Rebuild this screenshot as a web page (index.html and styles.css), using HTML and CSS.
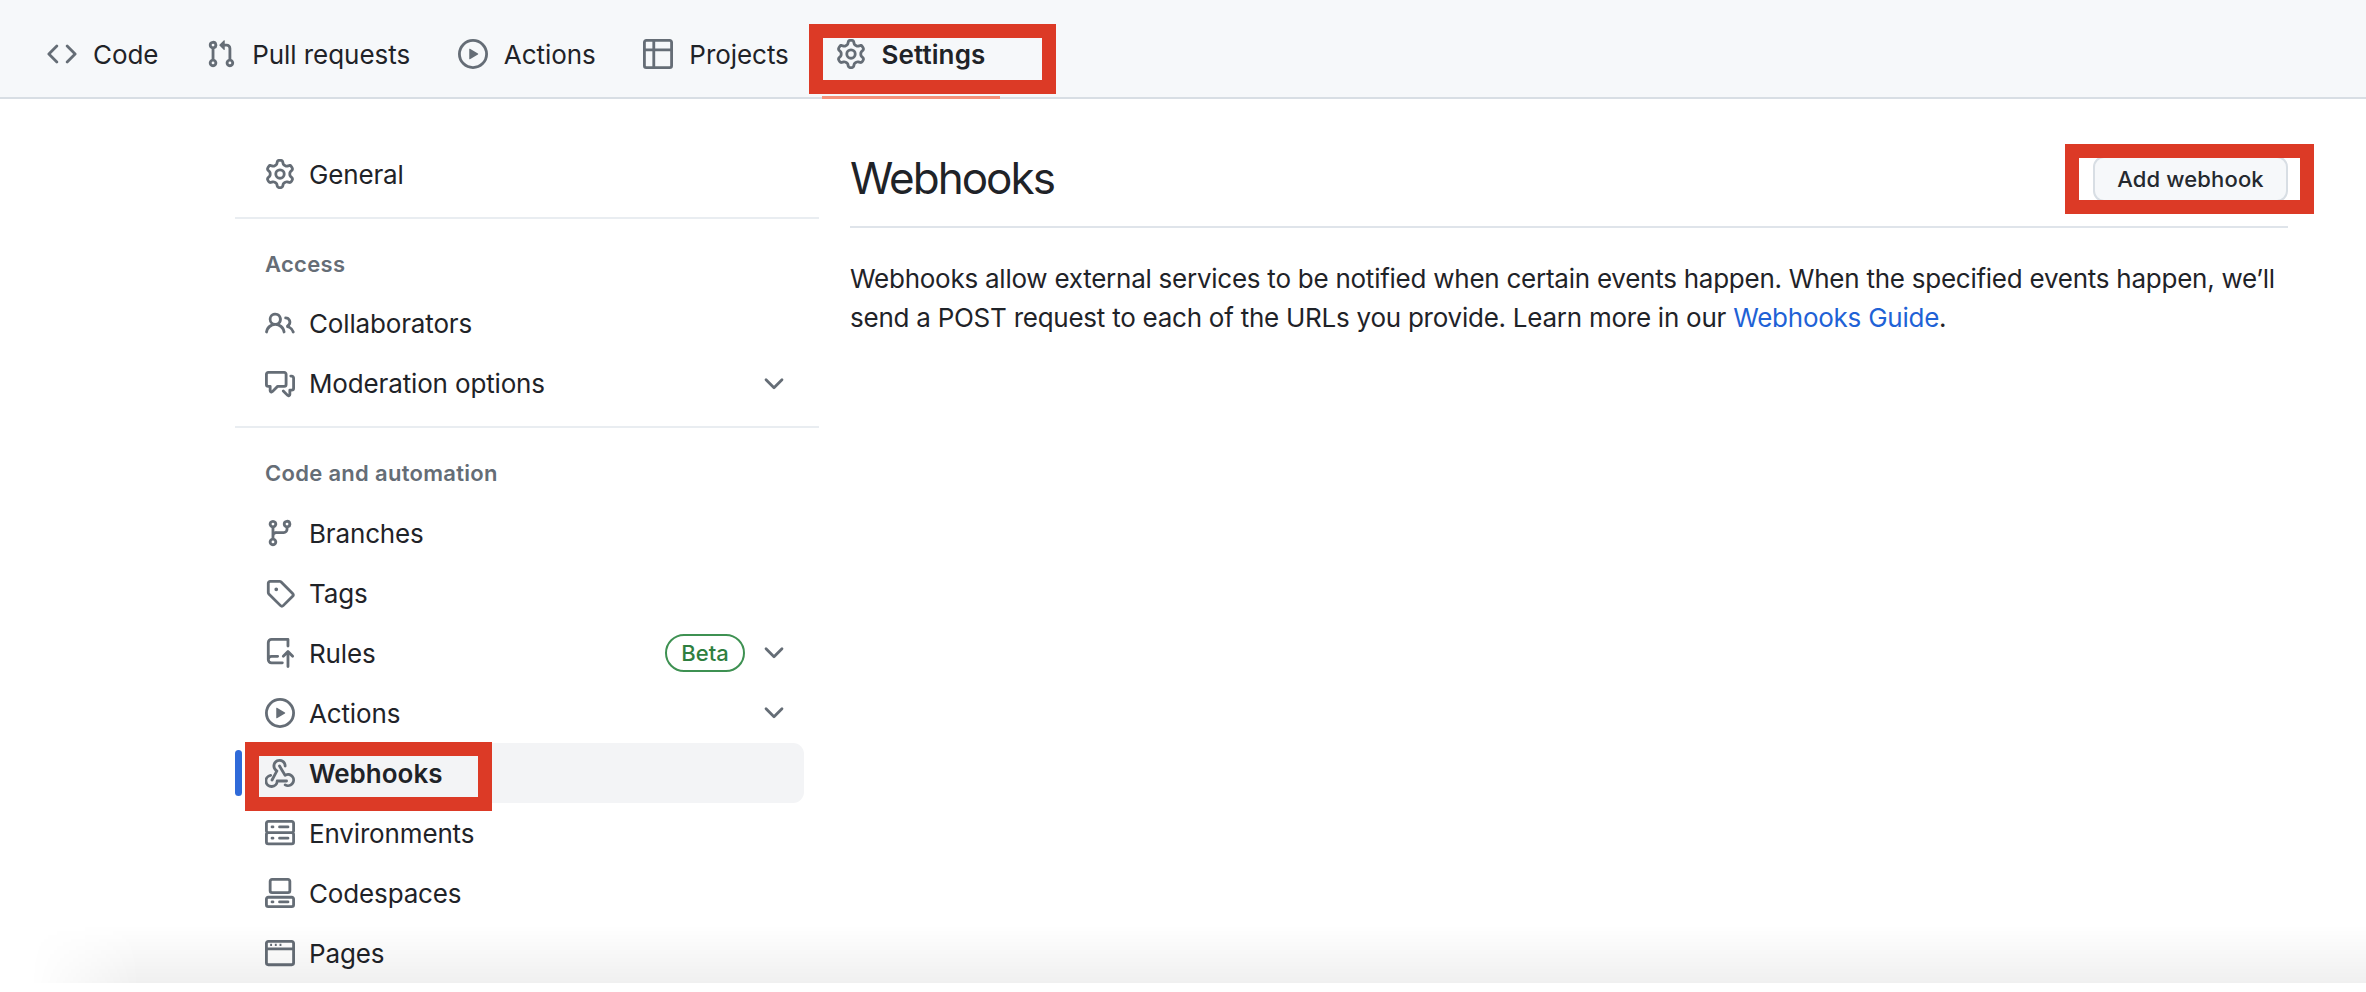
FILE: index.html
```html
<!DOCTYPE html>
<html lang="en">
<head>
<meta charset="utf-8">
<title>Webhooks</title>
<link rel="stylesheet" href="styles.css">
</head>
<body>
<svg class="sprite" width="0" height="0" aria-hidden="true">
  <symbol id="i-code" viewBox="0 0 16 16"><path d="M11.28 3.22l4.25 4.25a.75.75 0 010 1.06l-4.25 4.25a.749.749 0 01-1.275-.326.749.749 0 01.215-.734L13.94 8l-3.72-3.72a.749.749 0 01.326-1.275.749.749 0 01.734.215Zm-6.56 0a.751.751 0 011.042.018.751.751 0 01.018 1.042L2.06 8l3.72 3.72a.749.749 0 01-.326 1.275.749.749 0 01-.734-.215L.47 8.53a.75.75 0 010-1.06Z"/></symbol>
  <symbol id="i-pr" viewBox="0 0 16 16"><path d="M1.5 3.25a2.25 2.25 0 113 2.122v5.256a2.251 2.251 0 11-1.5 0V5.372A2.25 2.25 0 011.5 3.25Zm5.677-.177L9.573.677A.25.25 0 0110 .854V2.5h1A2.5 2.5 0 0113.5 5v5.628a2.251 2.251 0 11-1.5 0V5a1 1 0 00-1-1h-1v1.646a.25.25 0 01-.427.177L7.177 3.427a.25.25 0 010-.354ZM3.75 2.5a.75.75 0 100 1.5.75.75 0 000-1.5Zm0 9.5a.75.75 0 100 1.5.75.75 0 000-1.5Zm8.25.75a.75.75 0 101.5 0 .75.75 0 00-1.5 0Z"/></symbol>
  <symbol id="i-play" viewBox="0 0 16 16"><path d="M8 0a8 8 0 110 16A8 8 0 018 0ZM1.5 8a6.5 6.5 0 1013 0 6.5 6.5 0 00-13 0Zm4.879-2.773l4.264 2.559a.25.25 0 010 .428l-4.264 2.559A.25.25 0 016 10.559V5.442a.25.25 0 01.379-.215Z"/></symbol>
  <symbol id="i-table" viewBox="0 0 16 16"><path d="M0 1.75C0 .784.784 0 1.75 0h12.5C15.216 0 16 .784 16 1.75v12.5A1.75 1.75 0 0114.25 16H1.75A1.75 1.75 0 010 14.25ZM6.5 6.5v8h7.75a.25.25 0 00.25-.25V6.5Zm8-1.5V1.75a.25.25 0 00-.25-.25H6.5V5Zm-13 1.5v7.75c0 .138.112.25.25.25H5v-8ZM5 5V1.5H1.75a.25.25 0 00-.25.25V5Z"/></symbol>
  <symbol id="i-gear" viewBox="0 0 16 16"><path d="M8 0a8.2 8.2 0 0 1 .701.031C9.444.095 9.99.645 10.16 1.29l.288 1.107c.018.066.079.158.212.224.231.114.454.243.668.386.123.082.233.09.299.071l1.103-.303c.644-.176 1.392.021 1.82.63.27.385.506.792.704 1.218.315.675.111 1.422-.364 1.891l-.814.806c-.049.048-.098.147-.088.294.016.257.016.515 0 .772-.01.147.038.246.088.294l.814.806c.475.469.679 1.216.364 1.891a7.977 7.977 0 0 1-.704 1.217c-.428.61-1.176.807-1.82.63l-1.102-.302c-.067-.019-.177-.011-.3.071a5.909 5.909 0 0 1-.668.386c-.133.066-.194.158-.211.224l-.29 1.106c-.168.646-.715 1.196-1.458 1.26a8.006 8.006 0 0 1-1.402 0c-.743-.064-1.289-.614-1.458-1.26l-.289-1.106c-.018-.066-.079-.158-.212-.224a5.738 5.738 0 0 1-.668-.386c-.123-.082-.233-.09-.299-.071l-1.103.303c-.644.176-1.392-.021-1.82-.63a8.12 8.12 0 0 1-.704-1.218c-.315-.675-.111-1.422.363-1.891l.815-.806c.05-.048.098-.147.088-.294a6.214 6.214 0 0 1 0-.772c.01-.147-.038-.246-.088-.294l-.815-.806C.635 6.045.431 5.298.746 4.623a7.92 7.92 0 0 1 .704-1.217c.428-.61 1.176-.807 1.82-.63l1.102.302c.067.019.177.011.3-.071.214-.143.437-.272.668-.386.133-.066.194-.158.211-.224l.29-1.106C6.009.645 6.556.095 7.299.03 7.53.01 7.764 0 8 0Zm-.571 1.525c-.036.003-.108.036-.137.146l-.289 1.105c-.147.561-.549.967-.998 1.189-.173.086-.34.183-.5.29-.417.278-.97.423-1.529.27l-1.103-.303c-.109-.03-.175.016-.195.045-.22.312-.412.644-.573.99-.014.031-.021.11.059.19l.815.806c.411.406.562.957.53 1.456a4.709 4.709 0 0 0 0 .582c.032.499-.119 1.05-.53 1.456l-.815.806c-.081.08-.073.159-.059.19.162.346.353.677.573.989.02.03.085.076.195.046l1.102-.303c.56-.153 1.113-.008 1.53.27.161.107.328.204.501.29.447.222.85.629.997 1.189l.289 1.105c.029.109.101.143.137.146a6.6 6.6 0 0 0 1.142 0c.036-.003.108-.036.137-.146l.289-1.105c.147-.561.549-.967.998-1.189.173-.086.34-.183.5-.29.417-.278.97-.423 1.529-.27l1.103.303c.109.029.175-.016.195-.045.22-.313.411-.644.573-.99.014-.031.021-.11-.059-.19l-.815-.806c-.411-.406-.562-.957-.53-1.456a4.709 4.709 0 0 0 0-.582c-.032-.499.119-1.05.53-1.456l.815-.806c.081-.08.073-.159.059-.19a6.464 6.464 0 0 0-.573-.989c-.02-.03-.085-.076-.195-.046l-1.102.303c-.56.153-1.113.008-1.53-.27a4.44 4.44 0 0 0-.501-.29c-.447-.222-.85-.629-.997-1.189l-.289-1.105c-.029-.11-.101-.143-.137-.146a6.6 6.6 0 0 0-1.142 0ZM11 8a3 3 0 1 1-6 0 3 3 0 0 1 6 0ZM9.5 8a1.5 1.5 0 1 0-3.001.001A1.5 1.5 0 0 0 9.5 8Z"/></symbol>
  <symbol id="i-people" viewBox="0 0 16 16"><path d="M2 5.5a3.5 3.5 0 115.898 2.549 5.508 5.508 0 013.034 4.084.75.75 0 11-1.482.235 4 4 0 00-7.9 0 .75.75 0 01-1.482-.236A5.507 5.507 0 013.102 8.05 3.493 3.493 0 012 5.5ZM11 4a3.001 3.001 0 012.22 5.018 5.01 5.01 0 012.56 3.012.749.749 0 01-.885.954.752.752 0 01-.549-.514 3.507 3.507 0 00-2.522-2.372.75.75 0 01-.574-.73v-.352a.75.75 0 01.416-.672A1.5 1.5 0 0011 5.5.75.75 0 0111 4Zm-5.5-.5a2 2 0 10-.001 3.999A2 2 0 005.5 3.5Z"/></symbol>
  <symbol id="i-comment" viewBox="0 0 16 16"><path d="M1.75 1h8.5c.966 0 1.75.784 1.75 1.75v5.5A1.75 1.75 0 0110.25 10H7.061l-2.574 2.573A1.458 1.458 0 012 11.543V10h-.25A1.75 1.75 0 010 8.25v-5.5C0 1.784.784 1 1.75 1ZM1.5 2.75v5.5c0 .138.112.25.25.25h1a.75.75 0 01.75.75v2.19l2.72-2.72a.749.749 0 01.53-.22h3.5a.25.25 0 00.25-.25v-5.5a.25.25 0 00-.25-.25h-8.5a.25.25 0 00-.25.25Zm13 2a.25.25 0 00-.25-.25h-.5a.75.75 0 010-1.5h.5c.966 0 1.75.784 1.75 1.75v5.5A1.75 1.75 0 0114.25 12H14v1.543a1.458 1.458 0 01-2.487 1.03L9.22 12.28a.749.749 0 01.326-1.275.749.749 0 01.734.215l2.22 2.22v-2.19a.75.75 0 01.75-.75h1a.25.25 0 00.25-.25Z"/></symbol>
  <symbol id="i-branch" viewBox="0 0 16 16"><path d="M9.5 3.25a2.25 2.25 0 113 2.122V6A2.5 2.5 0 0110 8.5H6a1 1 0 00-1 1v1.128a2.251 2.251 0 11-1.5 0V5.372a2.25 2.25 0 111.5 0v1.836A2.493 2.493 0 016 7h4a1 1 0 001-1v-.628A2.25 2.25 0 019.5 3.25Zm-6 0a.75.75 0 101.5 0 .75.75 0 00-1.5 0Zm8.25-.75a.75.75 0 100 1.5.75.75 0 000-1.5ZM4.25 12a.75.75 0 100 1.5.75.75 0 000-1.5Z"/></symbol>
  <symbol id="i-tag" viewBox="0 0 16 16"><path d="M1 7.775V2.75C1 1.784 1.784 1 2.75 1h5.025c.464 0 .91.184 1.238.513l6.25 6.25a1.75 1.75 0 010 2.474l-5.026 5.026a1.75 1.75 0 01-2.474 0l-6.25-6.25A1.752 1.752 0 011 7.775Zm1.5 0c0 .066.026.13.073.177l6.25 6.25a.25.25 0 00.354 0l5.025-5.025a.25.25 0 000-.354l-6.25-6.25a.25.25 0 00-.177-.073H2.75a.25.25 0 00-.25.25ZM6 5a1 1 0 110 2 1 1 0 010-2Z"/></symbol>
  <symbol id="i-rules" viewBox="0 0 16 16"><path d="M1 2.5A2.5 2.5 0 013.5 0h8.75a.75.75 0 01.75.75v3.5a.75.75 0 01-1.5 0V1.5h-8a1 1 0 00-1 1v6.708A2.493 2.493 0 013.5 9h3.25a.75.75 0 010 1.5H3.5a1 1 0 000 2h5.75a.75.75 0 010 1.5H3.5A2.5 2.5 0 011 11.5Zm13.23 7.79h-.001l-1.224-1.224v6.184a.75.75 0 01-1.5 0V9.066L10.28 10.29a.75.75 0 01-1.06-1.061l2.505-2.504a.75.75 0 011.06 0L15.29 9.23a.751.751 0 01-.018 1.042.751.751 0 01-1.042.018Z"/></symbol>
  <symbol id="i-webhook" viewBox="0 0 16 16"><path d="M5.5 4.25a2.25 2.25 0 014.5 0 .75.75 0 001.5 0 3.75 3.75 0 10-6.14 2.889l-2.272 4.258a.75.75 0 001.324.706L7 7.25a.75.75 0 00-.309-1.015A2.25 2.25 0 015.5 4.25Z"/><path d="M7.364 3.607a.75.75 0 011.03.257l2.608 4.349a3.75 3.75 0 11-.628 6.785.75.75 0 01.752-1.299 2.25 2.25 0 10-.033-3.88.75.75 0 01-1.03-.256L7.107 4.636a.75.75 0 01.257-1.03Z"/><path class="stroke-part" d="M3 9.25a3 3 0 103.5 3h5"/></symbol>
  <symbol id="i-server" viewBox="0 0 16 16"><path d="M1.75 1h12.5c.966 0 1.75.784 1.75 1.75v4c0 .372-.116.717-.314 1 .198.283.314.628.314 1v4a1.75 1.75 0 01-1.75 1.75H1.75A1.75 1.75 0 010 12.75v-4c0-.372.116-.717.314-1a1.739 1.739 0 01-.314-1v-4C0 1.784.784 1 1.75 1ZM1.5 2.75v4c0 .138.112.25.25.25h12.5a.25.25 0 00.25-.25v-4a.25.25 0 00-.25-.25H1.75a.25.25 0 00-.25.25Zm.25 5.75a.25.25 0 00-.25.25v4c0 .138.112.25.25.25h12.5a.25.25 0 00.25-.25v-4a.25.25 0 00-.25-.25ZM7 4.75A.75.75 0 017.75 4h4.5a.75.75 0 010 1.5h-4.5A.75.75 0 017 4.75Zm0 6a.75.75 0 01.75-.75h4.5a.75.75 0 010 1.5h-4.5a.75.75 0 01-.75-.75ZM3 4.75a.75.75 0 01.75-.75h.5a.75.75 0 010 1.5h-.5A.75.75 0 013 4.75Zm0 6a.75.75 0 01.75-.75h.5a.75.75 0 010 1.5h-.5a.75.75 0 01-.75-.75Z"/></symbol>
  <symbol id="i-codespaces" viewBox="0 0 16 16"><path d="M0 11.25c0-.966.784-1.75 1.75-1.75h12.5c.966 0 1.75.784 1.75 1.75v3A1.75 1.75 0 0114.25 16H1.75A1.75 1.75 0 010 14.25Zm2-9.5C2 .784 2.784 0 3.75 0h8.5C13.216 0 14 .784 14 1.75v5a1.75 1.75 0 01-1.75 1.75h-8.5A1.75 1.75 0 012 6.75Zm1.75-.25a.25.25 0 00-.25.25v5c0 .138.112.25.25.25h8.5a.25.25 0 00.25-.25v-5a.25.25 0 00-.25-.25Zm-2 9.5a.25.25 0 00-.25.25v3c0 .138.112.25.25.25h12.5a.25.25 0 00.25-.25v-3a.25.25 0 00-.25-.25Z"/><path d="M7 12.75a.75.75 0 01.75-.75h4.5a.75.75 0 010 1.5h-4.5a.75.75 0 01-.75-.75Zm-4 0a.75.75 0 01.75-.75h.5a.75.75 0 010 1.5h-.5a.75.75 0 01-.75-.75Z"/></symbol>
  <symbol id="i-browser" viewBox="0 0 16 16"><path d="M0 2.75C0 1.784.784 1 1.75 1h12.5c.966 0 1.75.784 1.75 1.75v10.5A1.75 1.75 0 0114.25 15H1.75A1.75 1.75 0 010 13.25Zm1.5 0V5h13V2.75a.25.25 0 00-.25-.25H1.75a.25.25 0 00-.25.25Zm13 3.75h-13v6.75c0 .138.112.25.25.25h12.5a.25.25 0 00.25-.25ZM2.75 3h1v1.25h-1Zm2.5 0h1v1.25h-1Zm2.5 0h1v1.25h-1Z"/></symbol>
  <symbol id="i-chevron" viewBox="0 0 16 16"><path d="M12.78 5.22a.749.749 0 010 1.06l-4.25 4.25a.749.749 0 01-1.06 0L3.22 6.28a.749.749 0 111.06-1.06L8 8.939l3.72-3.719a.749.749 0 011.06 0Z"/></symbol>
</svg>

<nav class="tabs">
  <a class="tab"><svg class="icon"><use href="#i-code"/></svg><span>Code</span></a>
  <a class="tab"><svg class="icon"><use href="#i-pr"/></svg><span>Pull requests</span></a>
  <a class="tab"><svg class="icon"><use href="#i-play"/></svg><span>Actions</span></a>
  <a class="tab"><svg class="icon"><use href="#i-table"/></svg><span>Projects</span></a>
  <a class="tab tab-current"><svg class="icon"><use href="#i-gear"/></svg><span>Settings</span><i class="mark mark-tab"></i></a>
</nav>

<div class="layout">
  <aside class="side">
    <a class="row"><svg class="icon"><use href="#i-gear"/></svg><span>General</span></a>
    <hr class="rule">
    <div class="label">Access</div>
    <a class="row"><svg class="icon"><use href="#i-people"/></svg><span>Collaborators</span></a>
    <a class="row"><svg class="icon"><use href="#i-comment"/></svg><span>Moderation options</span><svg class="icon chev"><use href="#i-chevron"/></svg></a>
    <hr class="rule">
    <div class="label">Code and automation</div>
    <a class="row"><svg class="icon"><use href="#i-branch"/></svg><span>Branches</span></a>
    <a class="row"><svg class="icon"><use href="#i-tag"/></svg><span>Tags</span></a>
    <a class="row"><svg class="icon"><use href="#i-rules"/></svg><span>Rules</span><b class="beta">Beta</b><svg class="icon chev chev-after"><use href="#i-chevron"/></svg></a>
    <a class="row"><svg class="icon"><use href="#i-play"/></svg><span>Actions</span><svg class="icon chev"><use href="#i-chevron"/></svg></a>
    <a class="row row-current"><svg class="icon"><use href="#i-webhook"/></svg><span>Webhooks</span><i class="bar"></i><i class="mark mark-row"></i></a>
    <a class="row"><svg class="icon"><use href="#i-server"/></svg><span>Environments</span></a>
    <a class="row"><svg class="icon"><use href="#i-codespaces"/></svg><span>Codespaces</span></a>
    <a class="row"><svg class="icon"><use href="#i-browser"/></svg><span>Pages</span></a>
  </aside>
  <main class="main">
    <header class="head">
      <h1>Webhooks</h1>
      <div class="btn-wrap"><a class="btn">Add webhook</a><i class="mark mark-btn"></i></div>
    </header>
    <p class="intro">Webhooks allow external services to be notified when certain events happen. When the specified events happen, we’ll<br>send a POST request to each of the URLs you provide. Learn more in our <a class="link">Webhooks Guide</a>.</p>
  </main>
</div>
<div class="fade"></div>
</body>
</html>
```
FILE: styles.css
```css
* { box-sizing: border-box; }
html, body { margin: 0; height: 992px; overflow: hidden; background: #fff; }
body {
  position: relative;
  font-family: Inter, "Liberation Sans", sans-serif;
  font-size: 26px;
  color: #1f2328;
}
.sprite { position: absolute; }
.icon { width: 30px; height: 30px; fill: #656d76; flex: none; }
.stroke-part { fill: none; stroke: #656d76; stroke-width: 1.5; stroke-linecap: round; stroke-linejoin: round; }

.tabs {
  display: flex;
  gap: 17.7px;
  height: 99px;
  padding: 36px 0 0 32px;
  background: #f6f8fa;
  border-bottom: 2px solid #d8dee4;
}
.tab {
  position: relative;
  display: flex;
  align-items: center;
  gap: 16px;
  height: 36px;
  padding: 0 15px;
  letter-spacing: -0.05px;
}
.tab-current { gap: 15px; font-weight: 600; letter-spacing: 0.1px; }
.tab-current::after {
  content: "";
  position: absolute;
  left: 1px;
  right: 0;
  top: 60px;
  height: 3px;
  background: #f5917a;
}
.mark {
  position: absolute;
  border: 14px solid #dc3a26;
  display: block;
}
.mark-tab { left: -12px; right: -56px; top: -12px; height: 70px; }
.mark-row { left: -5px; top: -1px; width: 247px; height: 69px; }
.mark-btn { left: -28px; right: -26px; top: -12px; height: 70px; }

.layout { display: flex; align-items: flex-start; padding: 45px 0 0 235px; }
.side { width: 584px; flex: none; }
.row {
  position: relative;
  display: flex;
  align-items: center;
  gap: 14px;
  height: 60px;
  margin: 0 15px;
  padding: 0 15px;
  border-radius: 11px;
  letter-spacing: -0.15px;
}
.row-current { background: #f3f4f6; font-weight: 600; letter-spacing: 0; }
.row > .bar {
  position: absolute;
  left: -15px;
  top: 7px;
  width: 7px;
  height: 46px;
  border-radius: 4px;
  background: #2f6ad9;
}
.chev { margin-left: auto; }
.chev-after { margin-left: 0; }
.beta {
  margin-left: auto;
  height: 38px;
  width: 80px;
  display: flex;
  align-items: center;
  justify-content: center;
  border: 2px solid #3e9152;
  border-radius: 19px;
  color: #2f7f3f;
  font-size: 22px;
  font-weight: 500;
  letter-spacing: 0;
}
.rule { margin: 12.5px 0 0; border: 0; height: 2px; background: #e9edf1; }
.label {
  height: 75px;
  padding-top: 31px;
  font-size: 22px;
  line-height: 28px;
  font-weight: 600;
  color: #656d76;
  padding-left: 30px;
  letter-spacing: 0.3px;
}

.main { width: 1438px; margin-left: 31px; }
.head {
  display: flex;
  align-items: flex-start;
  justify-content: space-between;
  height: 84px;
  border-bottom: 2px solid #dfe4ea;
}
h1 { margin: 6px 0 0; font-size: 44px; line-height: 56px; font-weight: 400; letter-spacing: -2px; }
.btn-wrap { position: relative; margin-top: 12px; }
.btn {
  display: block;
  width: 195px;
  height: 46px;
  border: 2px solid #d8dee4;
  border-radius: 11px;
  background: #f6f8fa;
  font-size: 22px;
  font-weight: 500;
  line-height: 42px;
  text-align: center;
  color: #24292f;
  letter-spacing: 0.15px;
}
.intro { margin: 31px 0 0; line-height: 39.4px; white-space: nowrap; letter-spacing: -0.25px; }
.link { color: #1f62d6; }

.fade {
  position: absolute;
  left: 0;
  right: 0;
  top: 925px;
  height: 58px;
  background: linear-gradient(to bottom, rgba(0,0,0,0), rgba(0,0,0,.06));
  -webkit-mask-image: linear-gradient(to right, transparent 30px, #000 140px);
  mask-image: linear-gradient(to right, transparent 30px, #000 140px);
}
```
